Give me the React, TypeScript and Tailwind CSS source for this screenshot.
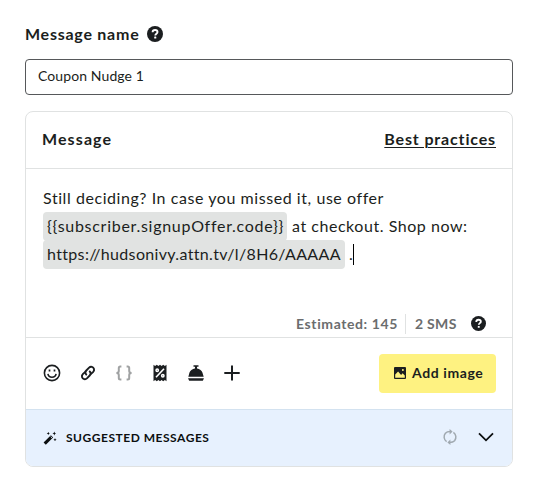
import React from 'react';

function HelpIcon({ className }: { className: string }) {
    return (
        <svg viewBox="0 0 16 16" className={className}>
            <circle cx="8" cy="8" r="8" fill="#1b1e20" />
            <path d="M5.6 6.3C5.6 4.8 6.6 4 8.1 4s2.4.8 2.4 2c0 1.6-2.2 1.7-2.2 3.4" fill="none" stroke="#fff" strokeWidth="1.9" />
            <rect x="7.2" y="10.6" width="2.1" height="2" rx=".4" fill="#fff" />
        </svg>
    );
}

function SmileIcon() {
    return (
        <svg viewBox="0 0 18 18" className="size-[18px]" fill="none" stroke="#1b1e20" strokeWidth="1.6">
            <circle cx="9" cy="9" r="7.6" />
            <path d="M4.9 9.9c.4 2.1 2 3.4 4.1 3.4s3.7-1.3 4.1-3.4" />
            <path d="M6.5 5.6v2M11.5 5.6v2" strokeWidth="1.7" />
        </svg>
    );
}

function LinkIcon() {
    return (
        <svg viewBox="0 0 18 18" className="size-[18px]" fill="none" stroke="#1b1e20" strokeWidth="1.9" strokeLinecap="round">
            <path d="M7.3 10.6a2.9 2.9 0 0 1 0-4.1l2.8-2.9a2.95 2.95 0 0 1 4.9 1.3c.3 1-.1 2.1-.8 2.9l-1.9 1.9" />
            <path d="M10.7 7.4a2.9 2.9 0 0 1 0 4.1l-2.8 2.9A2.95 2.95 0 0 1 3 13.1c-.3-1 .1-2.1.8-2.9l1.9-1.9" />
        </svg>
    );
}

function BracesIcon() {
    return (
        <svg viewBox="0 0 18 18" className="size-[18px]" fill="none" stroke="#a0a2a3" strokeWidth="2">
            <path d="M6.4 2.5H5.3c-1 0-1.5.6-1.5 1.5v3.1c0 1.1-.7 1.9-2.4 1.9 1.7 0 2.4.8 2.4 1.9V14c0 .9.5 1.5 1.5 1.5h1.1" />
            <path d="M11.6 2.5h1.1c1 0 1.5.6 1.5 1.5v3.1c0 1.1.7 1.9 2.4 1.9-1.7 0-2.4.8-2.4 1.9V14c0 .9-.5 1.5-1.5 1.5h-1.1" />
        </svg>
    );
}

function CouponIcon() {
    return (
        <svg viewBox="0 0 18 18" className="size-[18px]">
            <path d="M2.5.8l1.6 1.2L5.8.8l1.6 1.2L9 .8l1.6 1.2L12.2.8l1.7 1.2L15.5.8v16.4l-1.6-1.2-1.7 1.2-1.6-1.2L9 17.2l-1.6-1.2-1.6 1.2-1.7-1.2-1.6 1.2z" fill="#1b1e20" />
            <path d="M5 13.2l8-8.4" stroke="#fff" strokeWidth="1.6" />
            <circle cx="6.2" cy="6.3" r="1.2" fill="#1b1e20" stroke="#fff" strokeWidth="1.5" />
            <circle cx="11.8" cy="11.7" r="1.2" fill="#1b1e20" stroke="#fff" strokeWidth="1.5" />
        </svg>
    );
}

function BellIcon() {
    return (
        <svg viewBox="0 0 18 18" className="size-[18px]" fill="#1b1e20">
            <path d="M6.5 1.2h5v1.6H10v1.7c3.2.4 5.6 2.9 6 6.1l.7 2.1H1.3l.7-2.1c.4-3.2 2.8-5.7 6-6.1V2.8H6.5z" />
            <path d="M1 14.3h16l-1.2 2.5H2.2z" />
        </svg>
    );
}

function PlusIcon() {
    return (
        <svg viewBox="0 0 18 18" className="size-[18px]" fill="none" stroke="#1b1e20" strokeWidth="2">
            <path d="M9 1.5v15M1.3 9h15.4" />
        </svg>
    );
}

function ImageIcon() {
    return (
        <svg viewBox="0 0 12 12" className="size-3">
            <path d="M1 0h10a1 1 0 0 1 1 1v10a1 1 0 0 1-1 1H1a1 1 0 0 1-1-1V1a1 1 0 0 1 1-1z" fill="#1b1e20" />
            <path d="M1.2 10.7V7.4l2.9-3 3 3.5 1.5-1.6 2.2 2.2v2.2z" fill="#fef281" />
            <circle cx="8.9" cy="3.1" r="1" fill="#fef281" />
        </svg>
    );
}

function WandIcon() {
    return (
        <svg viewBox="0 0 14 14" className="size-3.5" fill="#0c0f10">
            <path d="M.6 11.6L7.9 4.3l2.2 2.2-7.3 7.3z" />
            <path d="M7.6 5.5l1.4 1.4" stroke="#e7f1fe" strokeWidth=".9" />
            <path d="M11.3.6l.6 1.3 1.3.6-1.3.6-.6 1.3-.6-1.3-1.3-.6 1.3-.6zM5.3.8l.5 1.1 1.1.5-1.1.5-.5 1.1-.5-1.1-1.1-.5 1.1-.5zM12 7.1l.5 1.1 1.1.5-1.1.5-.5 1.1-.5-1.1-1.1-.5 1.1-.5z" />
        </svg>
    );
}

function RefreshIcon() {
    return (
        <svg viewBox="0 0 16 16" className="size-4" fill="none" stroke="#a0a9b0" strokeWidth="1.5">
            <path d="M4.6 12.7A5.8 5.8 0 0 1 3.4 4.3C4.5 3.1 6 2.6 8.4 2.6" />
            <path d="M11.4 3.3a5.8 5.8 0 0 1 1.2 8.4c-1.1 1.2-2.6 1.7-5 1.7" />
            <path d="M7.6 0l3 2.6-3 2.8zM8.4 10.6l-3 2.8 3 2.6z" fill="#a0a9b0" stroke="none" />
        </svg>
    );
}

export default function App() {
    return (
        <div className="h-[492px] w-[538px] bg-white px-[25px] pt-6 font-['Lato','Liberation_Sans',sans-serif] text-[#1b1e20]">
            {/* Message name */}
            <div className="flex h-5 items-center gap-[7px]">
                <label className="w-[115px] whitespace-nowrap text-base leading-5 font-bold tracking-[0.75px]">Message name</label>
                <HelpIcon className="size-4" />
            </div>
            <div className="mt-[15px] flex h-9 items-center rounded border border-[#56585a] px-3 pb-0.5 text-sm tracking-[0.1px]">
                Coupon Nudge 1
            </div>

            {/* Message editor */}
            <section className="mt-4 h-[356px] overflow-hidden rounded-lg border border-[#e0e2e2]">
                <header className="flex h-[57px] items-center justify-between border-b border-[#e0e2e2] px-4 pb-0.5 text-base font-bold">
                    <h2 className="tracking-[1.1px]">Message</h2>
                    <a className="tracking-[0.85px] underline decoration-1 underline-offset-2">Best practices</a>
                </header>

                <div className="flex h-[169px] flex-col border-b border-[#e0e2e2] px-[17px] pt-[15px] text-base leading-7">
                    <p className="whitespace-nowrap tracking-[0.56px]">Still deciding? In case you missed it, use offer</p>
                    <div className="flex h-7 items-start whitespace-nowrap">
                        <span className="w-[244px] rounded bg-[#e1e3e2] px-1 pb-px tracking-[0.72px]">{'{{subscriber.signupOffer.code}}'}</span>
                        <span className="ml-[5px] tracking-[0.54px]">at checkout. Shop now:</span>
                    </div>
                    <div className="flex h-7 items-start whitespace-nowrap">
                        <span className="w-[302px] rounded bg-[#e1e3e2] px-1 pb-px tracking-[0.34px]">https://hudsonivy.attn.tv/l/8H6/AAAAA</span>
                        <span className="ml-[4px]">.</span>
                        <span className="mt-1 h-[21px] w-px bg-black" />
                    </div>

                    <div className="mt-auto flex h-[23px] items-start justify-end pr-[9px] text-sm leading-5 font-bold text-[#6b6d6e]">
                        <span className="tracking-[0.6px]">Estimated: 145</span>
                        <span className="mr-[9px] ml-[7px] h-5 w-px bg-[#e0e2e2]" />
                        <span className="w-[42px] tracking-[0.3px]">2 SMS</span>
                        <HelpIcon className="mt-[2px] ml-3.5 size-[15px]" />
                    </div>
                </div>

                <div className="flex h-[71px] items-center justify-between px-4">
                    <div className="flex items-center gap-[18px] pb-0.5 pl-px">
                        <SmileIcon />
                        <LinkIcon />
                        <BracesIcon />
                        <CouponIcon />
                        <BellIcon />
                        <PlusIcon />
                    </div>
                    <button className="flex h-[39px] w-[117px] items-center gap-1.5 rounded bg-[#fef281] pb-px pl-[15px] text-sm font-bold whitespace-nowrap">
                        <ImageIcon />
                        <span className="tracking-[0.6px]">Add image</span>
                    </button>
                </div>

                <footer className="flex h-[57px] items-center border-t border-[#d3e2f0] bg-[#e7f1fe] pr-[18px] pl-[17px] text-[#0c0f10]">
                    <WandIcon />
                    <span className="ml-[9px] text-xs font-bold tracking-[0.52px]">SUGGESTED MESSAGES</span>
                    <span className="ml-auto flex items-center gap-5 pb-[3px]">
                        <RefreshIcon />
                        <svg viewBox="0 0 16 10" className="h-2.5 w-4" fill="none" stroke="#0c0f10" strokeWidth="1.8">
                            <path d="M1 1.3l7 7 7-7" />
                        </svg>
                    </span>
                </footer>
            </section>
        </div>
    );
}
